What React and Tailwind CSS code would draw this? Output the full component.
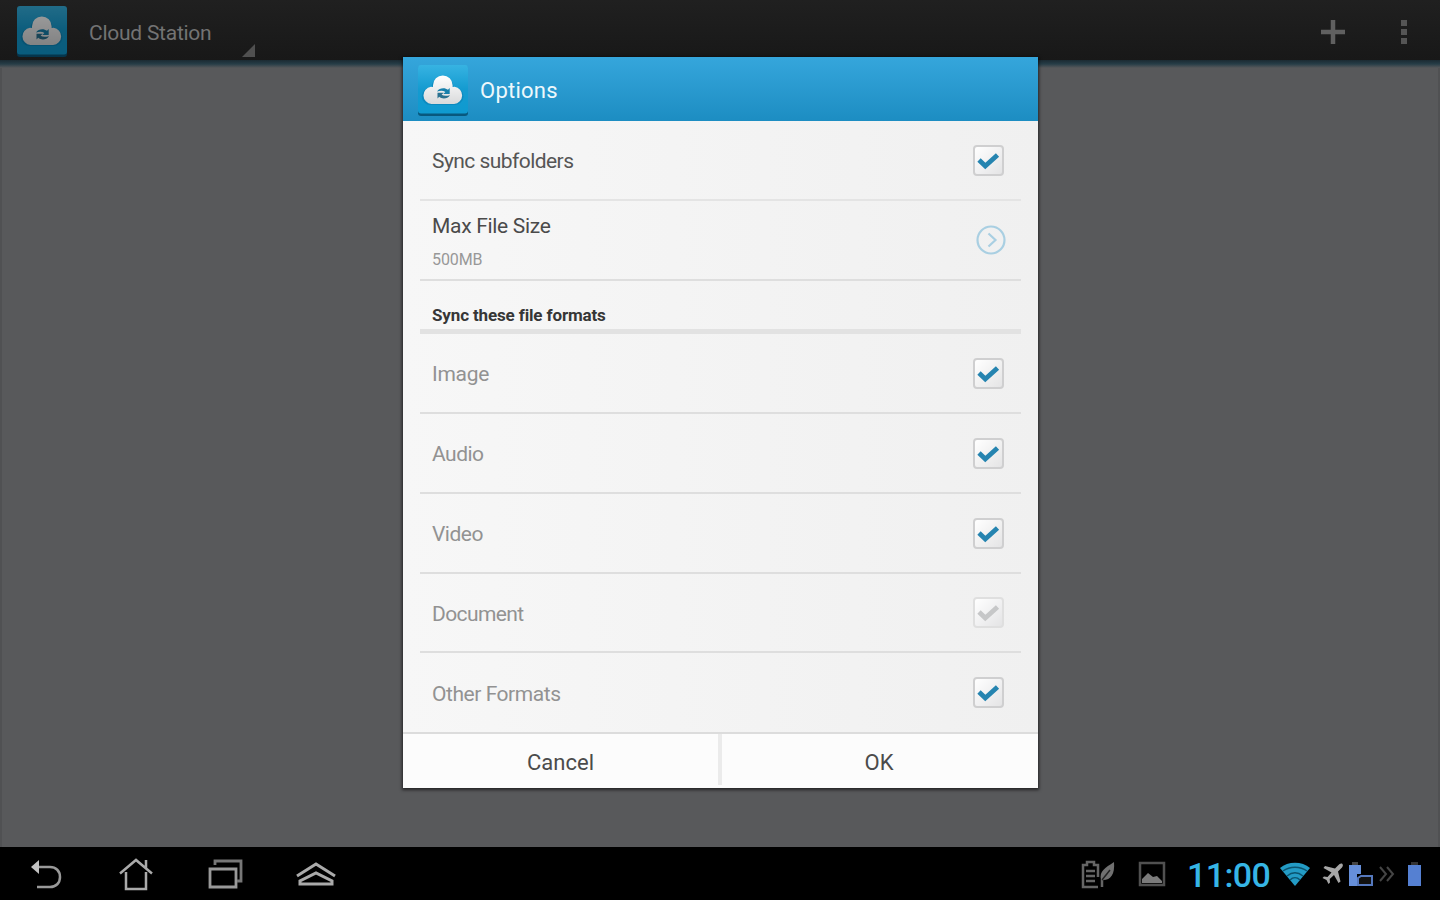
import React, { useState } from 'react';

const AppIcon = ({ id, className }) => (
    <svg viewBox="0 0 50 51" className={`h-[51px] w-[50px] shrink-0 ${className}`}>
        <defs>
            <linearGradient id={`${id}-bg`} x1="0" y1="0" x2="0" y2="1">
                <stop offset="0" stopColor="#37b3e2" />
                <stop offset="0.5" stopColor="#149bd0" />
                <stop offset="1" stopColor="#0f9ad0" />
            </linearGradient>
            <linearGradient id={`${id}-cloud`} x1="0" y1="0" x2="0" y2="1">
                <stop offset="0" stopColor="#ffffff" />
                <stop offset="1" stopColor="#d9dadb" />
            </linearGradient>
        </defs>
        <rect x="0" y="1" width="50" height="50" rx="3" fill="#08587e" />
        <rect x="0" y="0" width="50" height="48.5" rx="3" fill={`url(#${id}-bg)`} />
        <path d="M13 40a8.500 8.500 0 0 1-1-17.500h1.500a11 11 0 0 1 22 0h1.500a8.700 8.700 0 0 1-.5 17.500z" fill="#087aad" opacity="0.5" />
        <path d="M13.500 39a8.700 8.700 0 0 1-.5-17.300q1 0 2 .2v-1.700a9.800 9.800 0 0 1 19.600 0v1.700q1-.2 2-.2a8.700 8.700 0 0 1-.5 17.300z" fill={`url(#${id}-cloud)`} />
        <path d="M19 26.500c2.500-4 8-4.200 11-1.700l1.700-1.700v5.900h-6.500l2.200-2c-2.300-1.500-5-1.400-8.400-.5z" fill="#1780ac" />
        <path d="M32 30.200c-2.500 4-8 4.200-10.800 1.600l-1.700 1.700v-5.700h6.200l-2.100 2c2.200 1.400 5 1.300 8.400.4z" fill="#2a718f" />
    </svg>
);

const Checkbox = ({ disabled }) => (
    <span className={`flex h-[31px] w-[31px] items-center justify-center rounded-[4px] border-2 bg-linear-to-br from-white to-[#e4e4e5] ${disabled ? 'border-[#dfdfdf]' : 'border-[#cfcfd0]'}`}>
        <svg viewBox="0 0 27 27" className="h-[27px] w-[27px]">
            <path d="M4 13l6.300 6L22.500 8" fill="none" stroke={disabled ? '#c6c7c8' : '#2584b0'} strokeWidth="4.800" />
        </svg>
    </span>
);

const formats = [
    { name: 'Image', height: 'h-[80px]', tracking: 'tracking-[-0.3px]' },
    { name: 'Audio', height: 'h-[80px]', tracking: 'tracking-[-0.5px]' },
    { name: 'Video', height: 'h-[80px]', tracking: 'tracking-[-0.5px]' },
    { name: 'Document', height: 'h-[79px]', tracking: 'tracking-[-0.6px]', disabled: true },
    { name: 'Other Formats', height: 'h-[79px]', tracking: 'tracking-[-0.45px]' },
];

const ActionBar = () => (
    <header className="flex h-[60px] items-center bg-linear-to-b from-[#202020] to-[#181818] pl-[17px]">
        <AppIcon id="bar" className="mt-[3px] brightness-[0.6]" />
        <div className="flex h-full w-[188px] items-center justify-between pl-[22px]">
            <h1 className="mt-[6px] whitespace-nowrap text-[21px] leading-none tracking-[-0.25px] text-[#737373]">Cloud Station</h1>
            <svg viewBox="0 0 13 13" className="mb-[3px] h-[13px] w-[13px] self-end">
                <path d="M13 0v13H0z" fill="#505050" />
            </svg>
        </div>
        <div className="ml-auto flex items-center pt-[3px] pr-[32px]">
            <svg viewBox="0 0 24 24" className="mr-[55px] h-6 w-6">
                <path d="M12 0v24M0 12h24" stroke="#606060" strokeWidth="4.500" />
            </svg>
            <svg viewBox="0 0 8 26" className="h-[26px] w-2">
                <path d="M1 1h6v6H1zM1 10h6v6H1zM1 19h6v6H1z" fill="#555" />
            </svg>
        </div>
    </header>
);

const Dialog = () => {
    const [open, setOpen] = useState(true);
    if (!open) return null;

    return (
        <div className="absolute top-[57px] left-[403px] flex h-[731px] w-[635px] flex-col bg-linear-to-r from-[#f7f7f7] to-[#f0f0f0] shadow-[0_1px_3px_1px_rgba(0,0,0,0.6)]">
            <div className="flex h-[64px] shrink-0 items-center bg-linear-to-b from-[#35a6dc] to-[#1c8dc2] pl-[15px]">
                <AppIcon id="dialog" className="mt-[3px]" />
                <h2 className="mt-[3px] ml-[12px] text-[22px] leading-none tracking-[0.25px] text-[#eef8fc]">Options</h2>
            </div>
            <div className="flex flex-1 flex-col pr-[17px] pl-[17px] text-[21px] leading-none text-[#555]">
                <div className="flex h-[80px] items-center justify-between border-b-2 border-[#e4e4e4] pr-[17px] pl-[12px]">
                    <span className="mt-[3px] tracking-[-0.55px]">Sync subfolders</span>
                    <Checkbox />
                </div>
                <div className="flex h-[80px] items-center justify-between border-b-2 border-[#dedede] pr-[15px] pl-[12px]">
                    <div className="mt-[4px]">
                        <p className="tracking-[-0.3px] text-[#4a4a4a]">Max File Size</p>
                        <p className="mt-[15px] text-[16px] tracking-[-0.1px] text-[#989898]">500MB</p>
                    </div>
                    <svg viewBox="0 0 30 30" className="h-[30px] w-[30px]" fill="none" stroke="#a9cfe2" strokeWidth="2.200">
                        <circle cx="15" cy="15" r="13.500" />
                        <path d="M12.500 8.500l7 6.500-7 6.500" />
                    </svg>
                </div>
                <div className="flex h-[53px] items-end border-b-[5px] border-[#e2e2e2] pb-[5px] pl-[12px]">
                    <h3 className="text-[17px] font-bold tracking-[-0.14px] text-[#363636]">Sync these file formats</h3>
                </div>
                {formats.map((format, i) => (
                    <div
                        key={format.name}
                        className={`flex items-center justify-between pr-[17px] pl-[12px] ${format.height} ${i < formats.length - 1 ? 'border-b-2 border-[#dedede]' : ''}`}
                    >
                        <span className={`mt-[3px] text-[#929292] ${format.tracking}`}>{format.name}</span>
                        <Checkbox disabled={format.disabled} />
                    </div>
                ))}
            </div>
            <div className="flex h-[56px] shrink-0 border-t-2 border-[#dcdcdc] bg-[#fcfcfc] text-[22px] text-[#4b4b4b]">
                <button className="mb-[3px] w-[319px] border-r-4 border-[#ebebeb] pt-[5px]" onClick={() => setOpen(false)}>Cancel</button>
                <button className="flex-1 pt-[2px] pr-[2px]" onClick={() => setOpen(false)}>OK</button>
            </div>
        </div>
    );
};

const SystemBar = () => (
    <footer className="flex h-[53px] items-center justify-between bg-black pr-[18px] pl-[30px]">
        <div className="flex items-center">
            <svg viewBox="0 0 34 32" className="h-8 w-[34px]" fill="none" stroke="#999" strokeWidth="2.500">
                <path d="M7 9h13c6 0 10 4 10 10s-4 10-10 10H7" />
                <path d="M1 9l8-7v14z" fill="#c2c2c2" stroke="none" />
            </svg>
            <svg viewBox="0 0 34 34" className="ml-[55px] h-[34px] w-[34px]" fill="none" stroke="#aaa" strokeWidth="2.500">
                <path d="M1 16.500L17 3l16 13.500M7 15v17h20V15M27 11V3" />
            </svg>
            <svg viewBox="0 0 36 30" className="ml-[55px] h-[30px] w-9" fill="none" stroke="#999" strokeWidth="2.800">
                <path d="M2 10h26v18H2z" />
                <path d="M7 6V2h26v20h-4" stroke="#777" />
            </svg>
            <svg viewBox="0 0 42 26" className="ml-[51px] h-[26px] w-[42px]" fill="none" stroke="#aaa" strokeWidth="3">
                <path d="M2 15L21 3l19 12M5 23v-3l16-8 16 8v3z" />
            </svg>
        </div>
        <div className="flex items-center">
            <svg viewBox="0 0 36 30" className="h-[30px] w-9" fill="none" stroke="#656565" strokeWidth="2.500">
                <path d="M18 18V6h-4V3H7v3H3v22h15M6 12h9M6 17h9M6 22h9M22 28v-7l6-7" />
                <path d="M21 21c-2-9 4-12 13-18 1 12-3 18-11 18z" fill="#707070" stroke="none" />
                <path d="M22 21l8-10" stroke="#222" strokeWidth="1.500" />
            </svg>
            <svg viewBox="0 0 28 26" className="ml-[22px] h-[26px] w-7" fill="none" stroke="#505050" strokeWidth="2.500">
                <path d="M2 2h24v22H2z" />
                <path d="M4 22v-4l6-6 5 4 4-1 5 5v2z" fill="#7b7b7b" stroke="none" />
            </svg>
            <time className="mt-[2px] ml-[21px] w-[83px] text-[34px] leading-none font-medium tracking-[-0.6px] whitespace-nowrap text-[#36b5e5]">11:00</time>
            <svg viewBox="0 0 30 24" className="ml-[10px] h-6 w-[30px]">
                <path d="M0 6c8-7 22-7 30 0L15 24z" fill="#239bc5" />
                <path d="M3 9c7-5 17-5 24 0M7 14c5-4 11-4 16 0M10 18c3-3 7-3 10 0" fill="none" stroke="#0b536e" strokeWidth="1.500" />
            </svg>
            <svg viewBox="0 0 22 22" className="ml-[12px] h-[22px] w-[22px]">
                <path d="M20.500 1c-1.500-1-3 0-4.500 1.500L13 5.500 3 3 1.500 5l8 4.500-4 4.500-3.500-.5L.5 15l4 2 2 4 1.500-1.500-.3-3.500 4.300-4 4.500 8 2-1.500L16 8.500l3-3c1.500-1.500 2.500-3 1.500-4.500z" fill="#a6a6a6" />
            </svg>
            <svg viewBox="0 0 26 26" className="ml-[4px] h-[26px] w-[26px]">
                <path d="M4 1h6v3H4z" fill="#444" />
                <path d="M1 4h12v9H9v12H1z" fill="#668fda" />
                <path d="M10 24v-7l3-2h11v9z" fill="#111" stroke="#5578bd" strokeWidth="2" />
            </svg>
            <svg viewBox="0 0 16 16" className="ml-[5px] h-4 w-4" fill="none" stroke="#454545" strokeWidth="2">
                <path d="M1 1l6 7-6 7M8 1l6 7-6 7" />
            </svg>
            <svg viewBox="0 0 15 24" className="ml-[12px] h-6 w-[15px]">
                <path d="M4 0h7v3H4z" fill="#333" />
                <path d="M1 3h13v21H1z" fill="#5580d2" />
            </svg>
        </div>
    </footer>
);

export default function App() {
    return (
        <div className="relative flex h-[900px] w-[1440px] flex-col overflow-hidden bg-[#58595b] font-[Roboto,sans-serif]">
            <ActionBar />
            <div className="h-[8px] bg-linear-to-b from-[#1b2a32] via-[#263d47] to-[#58595b]" />
            <main className="flex-1 border-x-2 border-[#505153]" />
            <SystemBar />
            <Dialog />
        </div>
    );
}
